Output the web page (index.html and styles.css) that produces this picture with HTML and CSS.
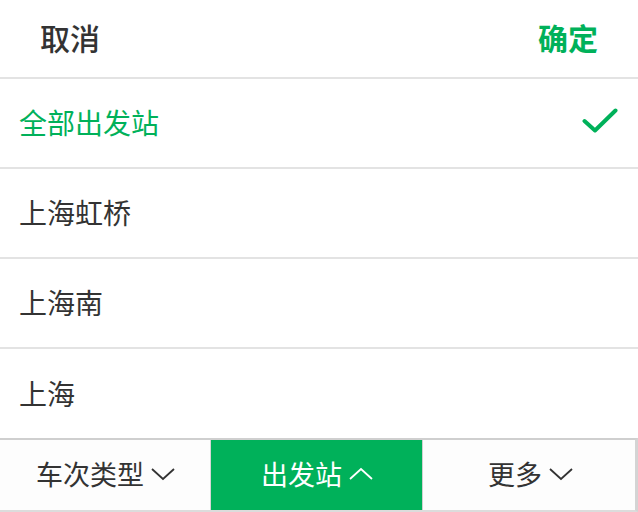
FILE: index.html
```html
<!DOCTYPE html>
<html lang="zh">
<head>
<meta charset="utf-8">
<link rel="stylesheet" href="styles.css">
</head>
<body>
<div class="page">
  <header class="bar">
    <span class="cancel">取消</span>
    <span class="ok">确定</span>
  </header>
  <ul class="list">
    <li class="row active">
      <span>全部出发站</span>
      <svg class="check" width="36" height="26" viewBox="0 0 36 26"><path d="M2.5 13 L13 22.5 L33.5 2.5" fill="none" stroke="#00b15a" stroke-width="4" stroke-linecap="round" stroke-linejoin="round"/></svg>
    </li>
    <li class="row"><span>上海虹桥</span></li>
    <li class="row"><span>上海南</span></li>
    <li class="row"><span>上海</span></li>
  </ul>
  <nav class="tabs">
    <div class="tab">车次类型<svg class="chev" width="26" height="14" viewBox="0 0 26 14"><path d="M2 2 L13 12 L24 2" fill="none" stroke="#333" stroke-width="1.8"/></svg></div>
    <div class="tab on">出发站<svg class="chev" width="26" height="14" viewBox="0 0 26 14"><path d="M2 12 L13 2 L24 12" fill="none" stroke="#fff" stroke-width="1.8"/></svg></div>
    <div class="tab">更多<svg class="chev" width="26" height="14" viewBox="0 0 26 14"><path d="M2 2 L13 12 L24 2" fill="none" stroke="#333" stroke-width="1.8"/></svg></div>
  </nav>
</div>
</body>
</html>
```

FILE: styles.css
```css
* { box-sizing: border-box; margin: 0; padding: 0; }
html, body { width: 638px; height: 512px; overflow: hidden; background: #fff; }
body { font-family: "Noto Sans CJK SC", "Noto Sans", sans-serif; color: #333; }
.page { display: flex; flex-direction: column; height: 512px; }
.bar {
  height: 79px;
  display: flex;
  justify-content: space-between;
  align-items: center;
  padding: 0 40px 3px 40px;
  border-bottom: 2px solid #e3e3e3;
  font-size: 30px;
  font-weight: 500;
}
.cancel { color: #333; }
.ok { color: #00b15a; font-weight: 700; }
.list { list-style: none; }
.row {
  height: 90px;
  display: flex;
  align-items: center;
  justify-content: space-between;
  padding: 0 20px 2px 19px;
  border-bottom: 2px solid #e3e3e3;
  font-size: 28px;
  color: #333;
}
.row:last-child { border-bottom: none; height: 89px; }
.row.active { color: #00b15a; }
.check { margin-top: -3px; }
.tabs {
  flex: 1;
  display: grid;
  grid-template-columns: 211px 212px 1fr;
  border-top: 2px solid #cfcfcf;
  border-bottom: 2px solid #dcdcdc;
  border-right: 3px solid #d4d4d4;
  background: #fdfdfd;
}
.tab {
  display: flex;
  align-items: center;
  justify-content: center;
  gap: 6px;
  font-size: 27px;
  color: #333;
  padding: 0 0 4px 2px;
  border-right: 1px solid #d6d6d6;
}
.tab:last-child { border-right: none; padding-left: 4px; }
.tab.on { background: #00b15a; color: #fff; border-right: 1px solid #d0d0d0; }
.chev { margin-top: 2px; }
```
